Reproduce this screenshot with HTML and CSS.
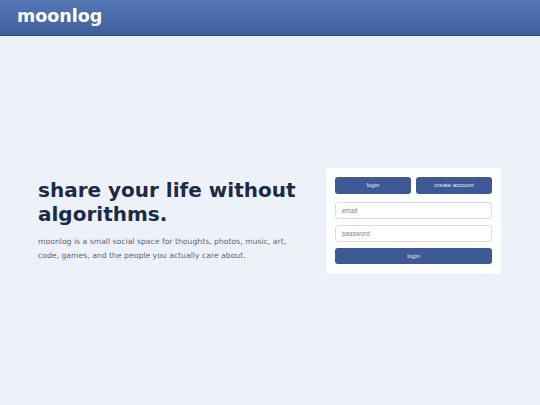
FILE: index.html
```html
<!DOCTYPE html>
<html>
<head>
<meta charset="utf-8">
<link rel="stylesheet" href="styles.css">
</head>
<body>
<header class="topbar">
  <div class="brand">moonlog</div>
</header>
<main class="main">
  <div class="wrap">
    <section class="intro">
      <h1 class="headline">share your life without algorithms.</h1>
      <p class="lead">moonlog is a small social space for thoughts, photos, music, art, code, games, and the people you actually care about.</p>
    </section>
    <section class="card">
      <div class="tabs">
        <button class="btn">login</button>
        <button class="btn">create account</button>
      </div>
      <input class="field first" type="text" placeholder="email">
      <input class="field" type="password" placeholder="password">
      <button class="btn submit">login</button>
    </section>
  </div>
</main>
</body>
</html>
```
FILE: styles.css
```css
html, body {
  margin: 0;
  padding: 0;
  height: 100%;
}
body {
  background: #edf2f9;
  font-family: "DejaVu Sans", sans-serif;
  display: flex;
  flex-direction: column;
}
.topbar {
  height: 36px;
  box-sizing: border-box;
  background: linear-gradient(#5479b6, #3f5f9a);
  border-bottom: 1px solid #2f4a7a;
  display: flex;
  align-items: center;
  padding-left: 17px;
}
.brand {
  color: #ffffff;
  font-weight: bold;
  font-size: 17.5px;
  line-height: 1;
  margin-top: -2px;
}
.main {
  flex: 1;
  display: flex;
  align-items: center;
  justify-content: center;
}
.wrap {
  width: 463px;
  display: flex;
  align-items: center;
  gap: 26px;
  margin-left: -1px;
}
.intro {
  flex: 1;
}
.headline {
  margin: 0 0 9px;
  font-size: 20px;
  line-height: 24px;
  font-weight: bold;
  color: #1c2a47;
}
.lead {
  margin: 0;
  font-size: 7.7px;
  line-height: 14px;
  color: #5b6679;
}
.card {
  width: 175px;
  box-sizing: border-box;
  background: #ffffff;
  border-radius: 3px;
  padding: 9px 9px 10px;
  display: flex;
  flex-direction: column;
}
.tabs {
  display: flex;
  gap: 5px;
}
.tabs .btn {
  flex: 1;
  height: 17px;
}
.btn {
  border: 0;
  border-radius: 3px;
  background: #3d5a97;
  color: #e8edf6;
  font-family: "Liberation Sans", Arial, sans-serif;
  font-size: 6px;
  padding: 0;
}
.field {
  height: 17px;
  box-sizing: border-box;
  border: 1px solid #d9dee6;
  border-radius: 3px;
  padding: 0 6px;
  margin-top: 6px;
  font-family: "Liberation Sans", Arial, sans-serif;
  font-size: 6.5px;
  color: #333;
  outline: none;
}
.field.first {
  margin-top: 8px;
}
.field::placeholder {
  color: #80858d;
}
.submit {
  height: 16px;
  margin-top: 6px;
}
```
